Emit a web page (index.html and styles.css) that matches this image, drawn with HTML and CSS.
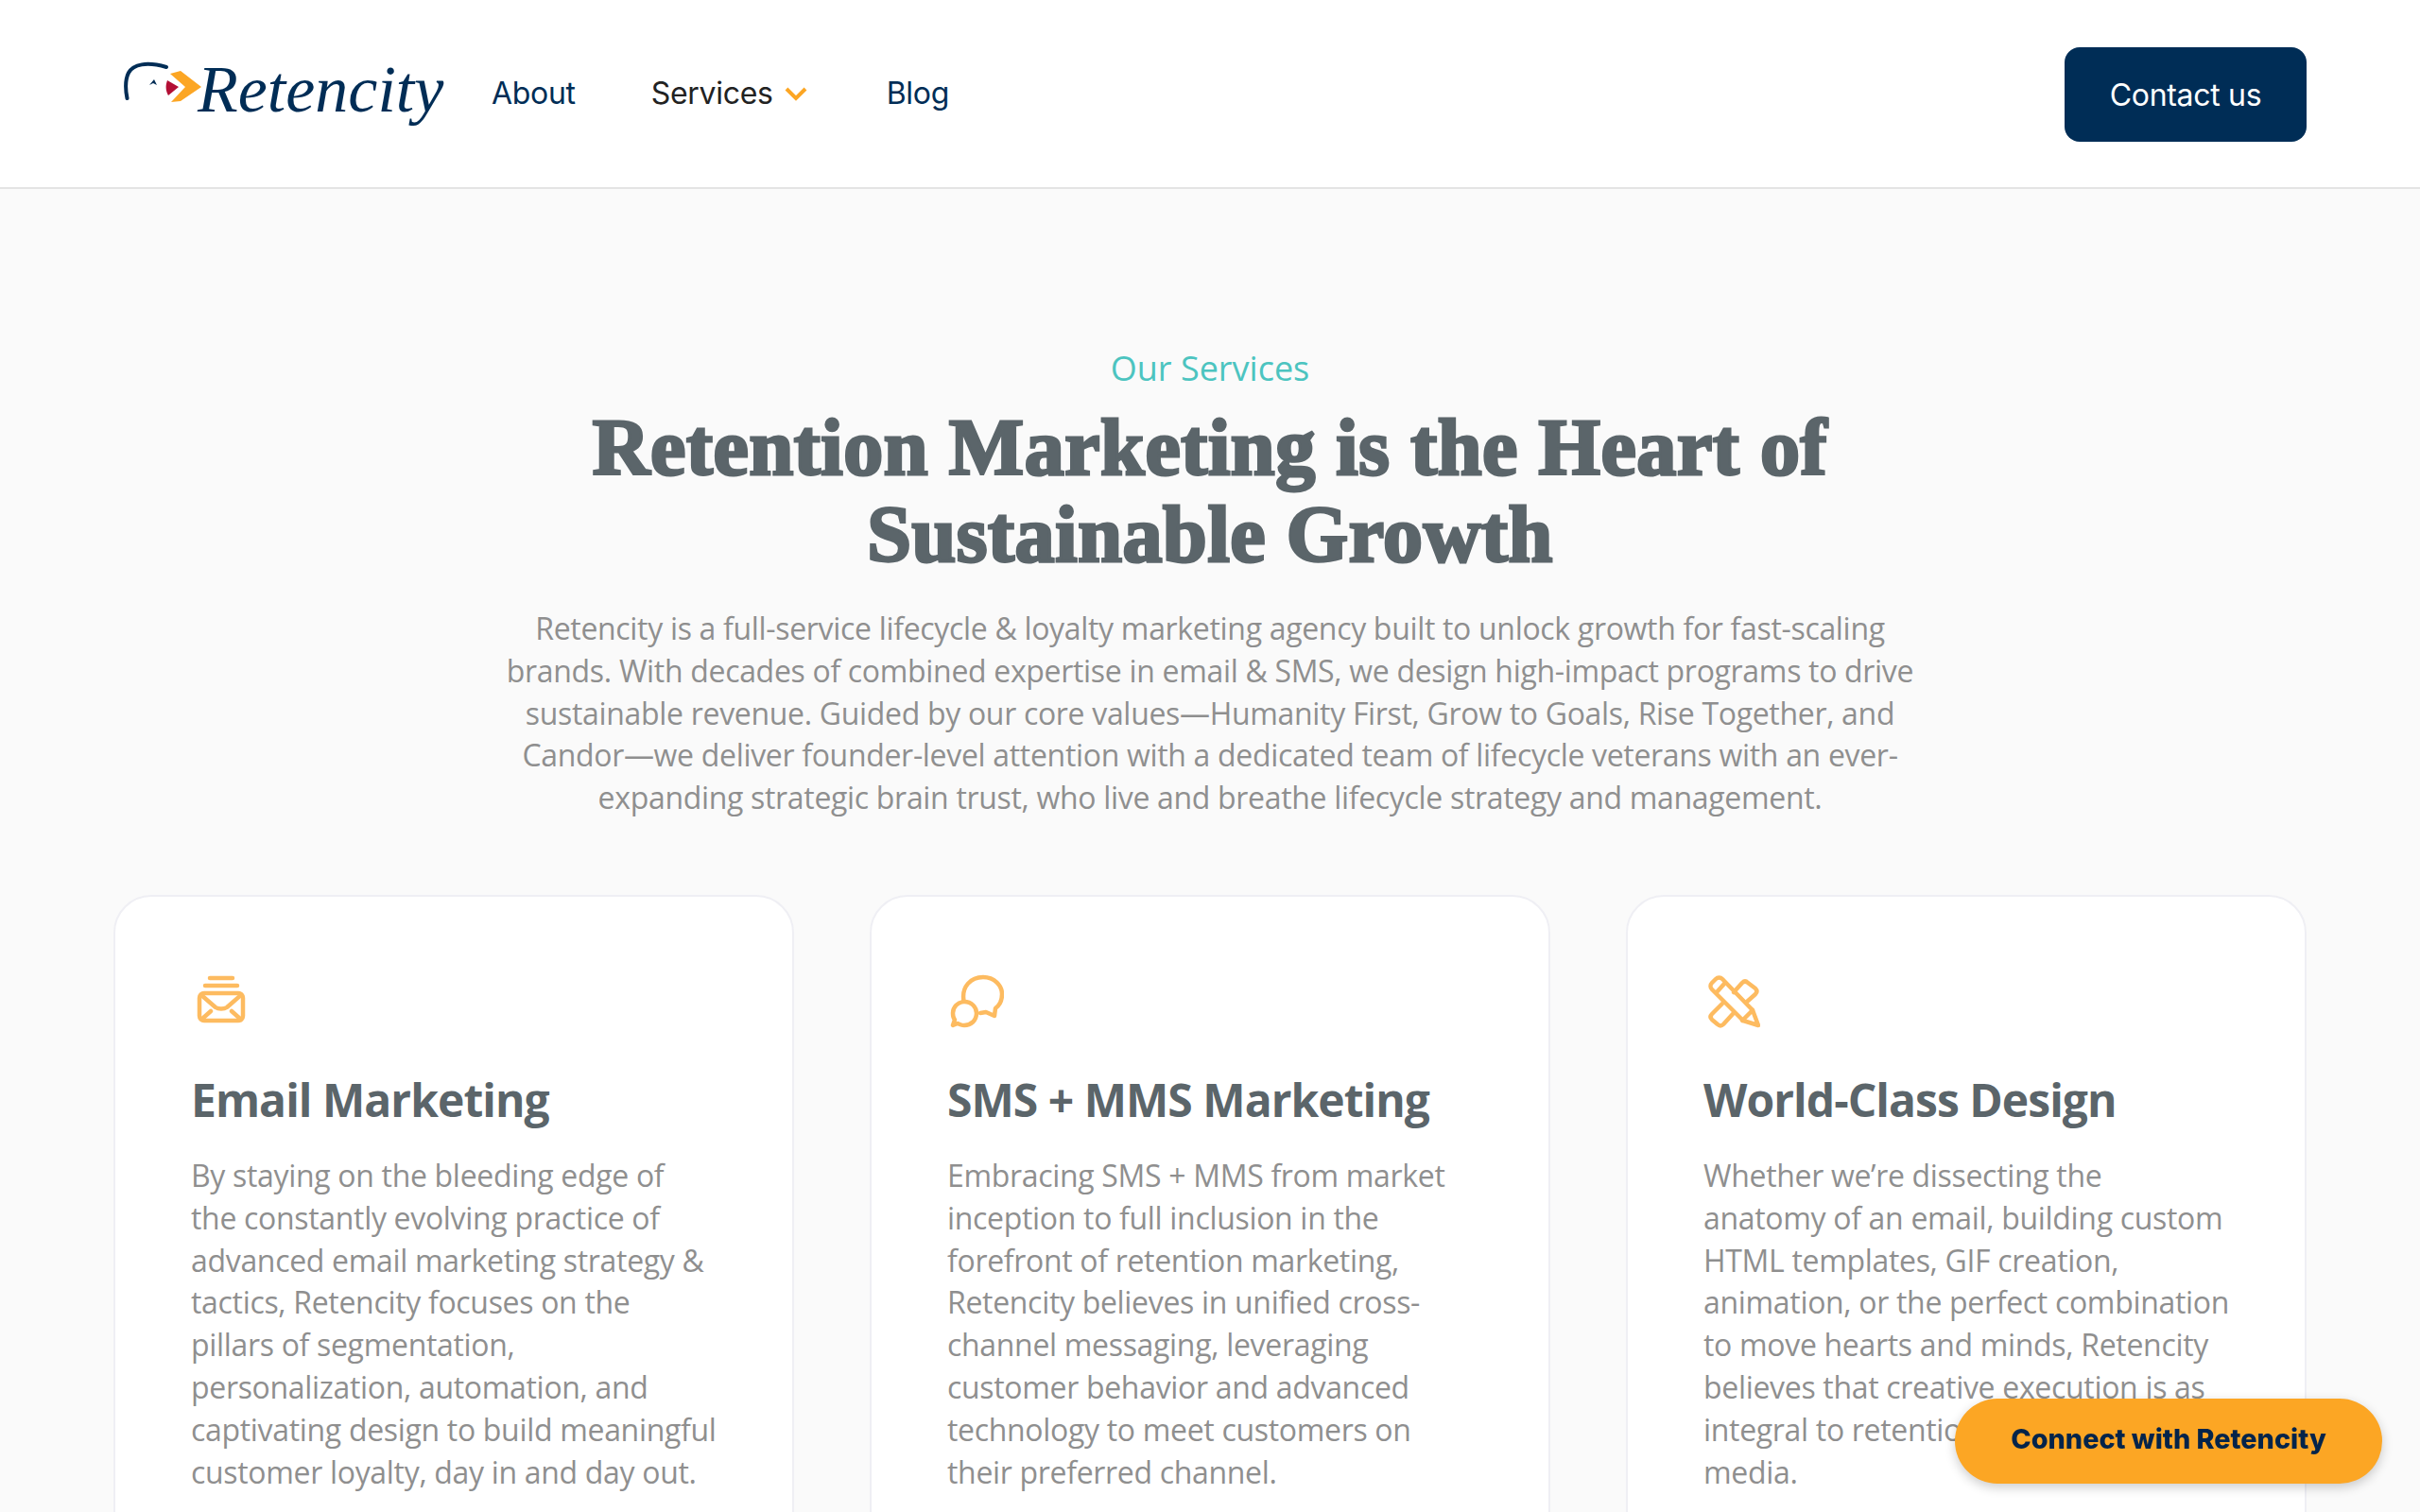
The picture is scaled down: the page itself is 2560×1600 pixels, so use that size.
FILE: index.html
```html
<!DOCTYPE html>
<html lang="en">
<head>
  <meta charset="UTF-8" />
  <title>Retencity</title>
  <link rel="stylesheet" href="styles.css">
</head>
<body>
  <header class="site-header">
    <a class="logo" href="#">
      <svg class="logo-mark" width="84" height="80" viewBox="0 0 84 80">
        <path d="M3.5 55 C1.5 45 1 36 5 28 C10 19 24 16 45 22" fill="none" stroke="#002d56" stroke-width="4" stroke-linecap="round"/>
        <path d="M27 41 L32 35 L35 41 L31 39 Z" fill="#002d56"/>
        <path d="M49 29 L60 26 L82 43 L60 58 L50 59 L65 43 Z" fill="#fca624"/>
        <path d="M46 36 L58 43 L47 52 C44 47 44 41 46 36 Z" fill="#b30f35"/>
      </svg>
      <span class="logo-text">Retencity</span>
    </a>
    <nav class="main-nav">
      <a href="#">About</a>
      <a href="#" class="nav-active">Services
        <svg width="26" height="16" viewBox="0 0 26 16"><path d="M3 3 L13 13 L23 3" fill="none" stroke="#fca624" stroke-width="4"/></svg>
      </a>
      <a href="#">Blog</a>
    </nav>
    <a class="contact-btn" href="#">Contact us</a>
  </header>

  <main class="services">
    <div class="eyebrow">Our Services</div>
    <h1>Retention Marketing is the Heart of<br>Sustainable Growth</h1>
    <p class="intro">Retencity is a full-service lifecycle &amp; loyalty marketing agency built to unlock growth for fast-scaling brands. With decades of combined expertise in email &amp; SMS, we design high-impact programs to drive sustainable revenue. Guided by our core values—Humanity First, Grow to Goals, Rise Together, and Candor—we deliver founder-level attention with a dedicated team of lifecycle veterans with an ever-expanding strategic brain trust, who live and breathe lifecycle strategy and management.</p>

    <div class="card-grid">
      <div class="card">
        <svg class="card-icon" width="60" height="60" viewBox="0 0 60 60">
          <rect x="9" y="22" width="46" height="29" rx="5"/>
          <path d="M11 24 L26 37 C29 39 35 39 38 37 L53 24 M12 49 L21 41 M52 49 L43 41"/>
          <path d="M20 6 H44 M15 14 H49"/>
        </svg>
        <h2>Email Marketing</h2>
        <p>By staying on the bleeding edge of the constantly evolving practice of advanced email marketing strategy &amp; tactics, Retencity focuses on the pillars of segmentation, personalization, automation, and captivating design to build meaningful customer loyalty, day in and day out.</p>
      </div>
      <div class="card">
        <svg class="card-icon" width="60" height="60" viewBox="0 0 60 60">
          <path d="M17.5 30 C15 15 25 5 38 5 C50 5 58 14 58 23 C58 30 55 35 51 38 L50 46 L41 42 L35 43"/>
          <path d="M18 31 C26 31 31 37 31 43 C31 51 25 56 18 56 C15 56 13 55 11 54 L6 56 L8 50 C6 48 6 46 6 43 C6 37 11 31 18 31 Z"/>
        </svg>
        <h2>SMS + MMS Marketing</h2>
        <p>Embracing SMS + MMS from market inception to full inclusion in the forefront of retention marketing, Retencity believes in unified cross-channel messaging, leveraging customer behavior and advanced technology to meet customers on their preferred channel.</p>
      </div>
      <div class="card">
        <svg class="card-icon" width="60" height="60" viewBox="0 0 60 60">
          <path d="M13 7 C15 5 18 5 20 7 L52 40 L58 56 L42 51 L9 18 C7 16 7 13 9 11 Z"/>
          <path d="M14 21 L22 12 M41 51 L52 40"/>
          <path d="M32 21 L41 11 C43 9 45 9 47 11 L55 17 C57 19 57 21 55 23 L46 31"/>
          <path d="M20 33 L9 44 C7 46 7 48 9 50 L15 55 C17 57 19 57 21 55 L31 44"/>
        </svg>
        <h2>World-Class Design</h2>
        <p>Whether we’re dissecting the anatomy of an email, building custom HTML templates, GIF creation, animation, or the perfect combination to move hearts and minds, Retencity believes that creative execution is as integral to retention as the copy and media.</p>
      </div>
    </div>
  </main>

  <a class="connect-btn" href="#"><span>Connect with Retencity</span></a>
</body>
</html>
```

FILE: styles.css
```css
* {
  box-sizing: border-box;
}
html, body {
  height: 100%;
  overflow: hidden;
}
body {
  margin: 0;
  background: #fafafa;
  font-family: 'Open Sans', sans-serif;
}
a {
  text-decoration: none;
}
.site-header {
  display: flex;
  align-items: center;
  height: 200px;
  padding: 0 120px 0 131px;
  background: #fff;
  border-bottom: 2px solid #e4e4e4;
}
.logo {
  display: flex;
  align-items: flex-start;
  width: 389px;
  height: 100px;
}
.logo-mark {
  flex-shrink: 0;
}
.logo-text {
  margin-left: -6px;
  font-family: 'Liberation Serif', serif;
  font-style: italic;
  font-size: 70px;
  line-height: 92px;
  color: #002d56;
}
.main-nav {
  display: flex;
  gap: 80px;
  margin-top: -1px;
  font-family: Inter, sans-serif;
  font-size: 32px;
  letter-spacing: -0.3px;
}
.main-nav a {
  display: flex;
  align-items: center;
  gap: 11px;
  color: #002d56;
}
.main-nav a.nav-active {
  padding-right: 3px;
  color: #222;
}
.contact-btn {
  margin-left: auto;
  margin-top: 2px;
  display: flex;
  align-items: center;
  justify-content: center;
  width: 256px;
  height: 100px;
  border-radius: 16px;
  background: #002d56;
  color: #fff;
  font-family: Inter, sans-serif;
  font-size: 32px;
  letter-spacing: -0.3px;
}
.services {
  padding: 165px 120px 0;
  text-align: center;
}
.eyebrow {
  font-size: 36px;
  line-height: 50px;
  color: #4cc4c0;
}
h1 {
  margin: 13px 0 0;
  font-family: 'Liberation Serif', serif;
  font-weight: 700;
  font-size: 84px;
  line-height: 92px;
  letter-spacing: 0.6px;
  color: #5b656a;
  -webkit-text-stroke: 3px #5b656a;
}
.intro {
  width: 1500px;
  margin: 31px auto 0;
  font-size: 32px;
  line-height: 44.8px;
  letter-spacing: -0.32px;
  color: #8f8f8f;
}
.card-grid {
  display: grid;
  grid-template-columns: repeat(3, 720px);
  gap: 80px;
  margin-top: 80px;
  text-align: left;
}
.card {
  height: 900px;
  padding: 80px;
  background: #fff;
  border: 2px solid #efeff4;
  border-radius: 40px;
}
.card-icon {
  display: block;
  fill: none;
  stroke: #fdbb60;
  stroke-width: 4.5;
  stroke-linejoin: round;
  stroke-linecap: round;
}
.card h2 {
  margin: 44px 0 0;
  font-size: 48px;
  line-height: 62px;
  font-weight: 700;
  letter-spacing: -0.96px;
  color: #5b656a;
}
.card p {
  margin: 27px 0 0;
  font-size: 32px;
  line-height: 44.8px;
  letter-spacing: -0.32px;
  color: #8f8f8f;
}
.connect-btn {
  position: fixed;
  right: 40px;
  bottom: 30px;
  display: flex;
  align-items: center;
  justify-content: center;
  width: 452px;
  height: 90px;
  padding-bottom: 6px;
  border-radius: 45px;
  background: #fca624;
  color: #04244a;
  font-family: Inter, sans-serif;
  font-size: 28.8px;
  font-weight: 800;
  box-shadow: 0 4px 12px rgba(0, 0, 0, 0.2);
}
```
